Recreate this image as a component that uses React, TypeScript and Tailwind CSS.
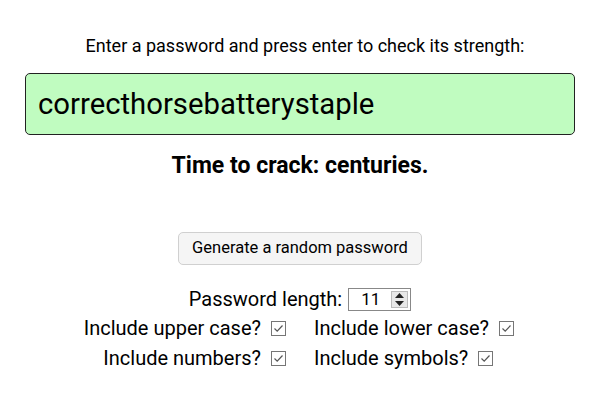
import { useState } from "react";

const Check = () => (
  <svg width="15" height="15" viewBox="0 0 15 15" className="inline-block">
    <rect x="0.5" y="0.5" width="14" height="14" fill="white" stroke="#767676" />
    <path d="M3.5 7.5 L6.2 10.2 L11.5 4.5" fill="none" stroke="#555" strokeWidth="1.2" />
  </svg>
);

const Option = ({ label, align }: { label: string; align: "left" | "right" }) => (
  <label
    className={`flex items-center gap-[10px] ${align === "right" ? "justify-end" : "justify-start"}`}
  >
    <span>{label}</span>
    <Check />
  </label>
);

export default function App() {
  const [pw, setPw] = useState("correcthorsebatterystaple");

  return (
    <div
      className="w-[600px] h-[400px] bg-white text-black flex flex-col items-center"
      style={{ fontFamily: "Roboto, 'Liberation Sans', sans-serif" }}
    >
      <p className="mt-[35px] ml-[10px] text-[18px] leading-[22px]">
        Enter a password and press enter to check its strength:
      </p>

      <input
        value={pw}
        onChange={(e) => setPw(e.target.value)}
        className="mt-[16px] w-[550px] h-[62px] rounded-[5px] border border-[#222] bg-[#c0fcc0] px-[12px] text-[29.3px] outline-none"
        style={{ fontFamily: "Roboto, 'Liberation Sans', sans-serif" }}
      />

      <p className="mt-[18px] text-[23px] leading-[26px] font-bold">Time to crack: centuries.</p>

      <button className="mt-[53px] h-[33px] w-[244px] rounded-[5px] border border-[#d0d0d0] bg-[#f5f5f5] text-[16.5px]">
        Generate a random password
      </button>

      <div className="mt-[22px] flex items-center gap-[6px] text-[20px] leading-[24px]">
        <span>Password length:</span>
        <div className="flex h-[23px] w-[63px] items-center justify-between border border-[#888] pl-[12px] pr-[2px]">
          <span className="text-[17px]">11</span>
          <div className="flex h-[17px] w-[17px] flex-col items-center justify-center gap-[3px] border border-[#bbb] bg-[#e8e8e8]">
            <svg width="9" height="5" viewBox="0 0 9 5">
              <path d="M0 5 L4.5 0 L9 5 Z" fill="#222" />
            </svg>
            <svg width="9" height="5" viewBox="0 0 9 5">
              <path d="M0 0 L4.5 5 L9 0 Z" fill="#222" />
            </svg>
          </div>
        </div>
      </div>

      <div className="mt-[5px] grid grid-cols-[1fr_1fr] gap-x-[28px] gap-y-[6px] text-[20px] leading-[24px] w-[600px]">
        <Option label="Include upper case?" align="right" />
        <Option label="Include lower case?" align="left" />
        <Option label="Include numbers?" align="right" />
        <Option label="Include symbols?" align="left" />
      </div>
    </div>
  );
}
